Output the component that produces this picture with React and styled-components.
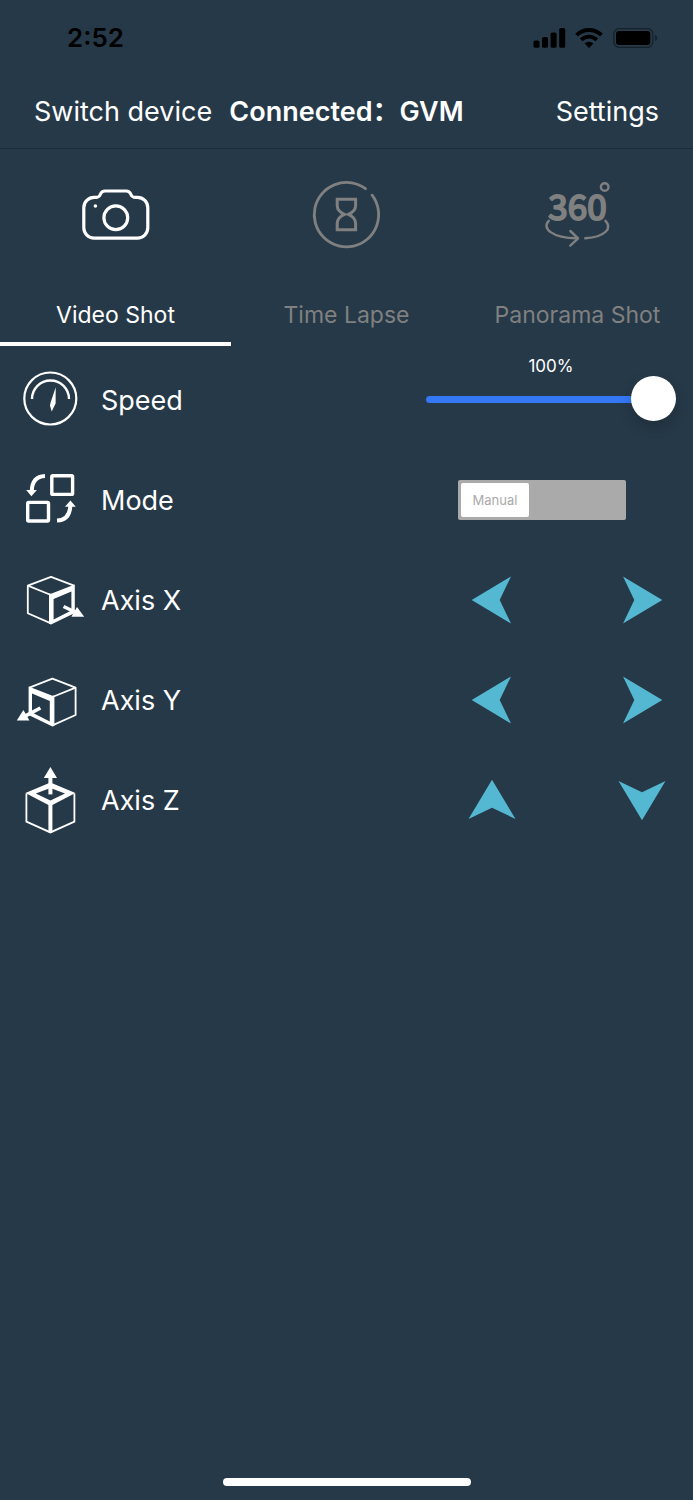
import { useState } from 'react'
import styled, { createGlobalStyle } from 'styled-components'


const tabs = [
    { id: 'video', label: 'Video Shot', Icon: CameraIcon },
    { id: 'lapse', label: 'Time Lapse', Icon: HourglassIcon },
    { id: 'panorama', label: 'Panorama Shot', Icon: PanoramaIcon },
]

const axes = [
    { name: 'Axis X', Icon: AxisXIcon, moves: [['left', 180], ['right', 0]] },
    { name: 'Axis Y', Icon: AxisYIcon, moves: [['left', 180], ['right', 0]] },
    { name: 'Axis Z', Icon: AxisZIcon, moves: [['up', 270], ['down', 90]] },
]

const App = () => {

    const [tab, setTab] = useState('video')
    const [speed, setSpeed] = useState(100)
    const [auto, setAuto] = useState(false)

    return (
        <Layout>
            <GlobalStyle />
            <StatusBar>
                <Time>2:52</Time>
                <StatusIcons />
            </StatusBar>
            <NavBar>
                <NavLink href="#devices">Switch device</NavLink>
                <Title>Connected：GVM</Title>
                <NavLink href="#settings" $end>Settings</NavLink>
            </NavBar>
            <Tabs role="tablist">
                {tabs.map(({ id, label, Icon }) => (
                    <Tab
                        key={id}
                        role="tab"
                        aria-selected={tab === id}
                        $active={tab === id}
                        onClick={() => setTab(id)}
                    >
                        <Icon />
                        <TabLabel>{label}</TabLabel>
                    </Tab>
                ))}
            </Tabs>
            <Rows>
                <Row>
                    <SpeedIcon />
                    <Name as="label" htmlFor="speed">Speed</Name>
                    <SpeedControl>
                        <Percent>{speed}%</Percent>
                        <Slider
                            id="speed"
                            type="range"
                            min="0"
                            max="100"
                            value={speed}
                            style={{ '--fill': `${speed}%` }}
                            onChange={(e) => setSpeed(Number(e.target.value))}
                        />
                    </SpeedControl>
                </Row>
                <Row>
                    <ModeIcon />
                    <Name id="mode">Mode</Name>
                    <Switch
                        role="switch"
                        aria-checked={auto}
                        aria-labelledby="mode"
                        $on={auto}
                        onClick={() => setAuto(!auto)}
                    >
                        <SwitchThumb>{auto ? 'Auto' : 'Manual'}</SwitchThumb>
                    </Switch>
                </Row>
                {axes.map(({ name, Icon, moves }) => (
                    <Row key={name}>
                        <Icon />
                        <Name>{name}</Name>
                        <Arrows>
                            {moves.map(([direction, angle]) => (
                                <ArrowButton key={direction} aria-label={`${name} ${direction}`}>
                                    <svg width="50" height="50" viewBox="0 0 50 50">
                                        <path d="M6 1.5 L45.3 25 L6 48.5 L17.3 25 Z" fill="#54b8d2" transform={`rotate(${angle} 25 25)`} />
                                    </svg>
                                </ArrowButton>
                            ))}
                        </Arrows>
                    </Row>
                ))}
            </Rows>
            <Footer>
                <HomeBar />
            </Footer>
        </Layout>
    )
}

export default App

function StatusIcons() {
    return (
        <svg width="125" height="20" viewBox="0 0 125 20" aria-hidden="true">
            <rect x="0.5" y="12.5" width="6" height="7.3" rx="1.6" />
            <rect x="9" y="9" width="6" height="10.8" rx="1.6" />
            <rect x="17.6" y="4.6" width="6" height="15.2" rx="1.6" />
            <rect x="26.2" y="0" width="6" height="19.8" rx="1.6" />
            <g fill="none" stroke="#000">
                <path d="M43.6 7.1 A17.5 17.5 0 0 1 68.4 7.1" strokeWidth="4" />
                <path d="M48.2 11.9 A11 11 0 0 1 63.8 11.9" strokeWidth="3.8" />
            </g>
            <path d="M56 19.9 L51.6 15.6 A6.2 6.2 0 0 1 60.4 15.6 Z" />
            <rect x="80.8" y="0.6" width="39" height="18.8" rx="5.4" fill="none" stroke="#000" strokeOpacity="0.4" strokeWidth="1.4" />
            <rect x="83" y="3" width="34.3" height="14" rx="3" />
            <path d="M122 6.8 Q124.4 8 124.4 10 Q124.4 12 122 13.2 Z" fillOpacity="0.4" />
        </svg>
    )
}

function CameraIcon() {
    return (
        <TabIcon viewBox="0.5 0 80 80" strokeWidth="3.2">
            <path d="M18.6 23.4 H20 C23.2 23.4 24 22.6 25 20 C26 17.6 26.8 17 29.5 17 H50.6 C53.4 17 54.2 17.6 55.2 20 C56.2 22.6 57 23.4 60.2 23.4 H62 A10.3 10.3 0 0 1 72.3 33.7 V53.8 A10.3 10.3 0 0 1 62 64.1 H18.6 A10.3 10.3 0 0 1 8.3 53.8 V33.7 A10.3 10.3 0 0 1 18.6 23.4 Z" />
            <circle cx="40.3" cy="43.7" r="11.9" />
            <circle cx="19.9" cy="32" r="1.8" fill="currentColor" stroke="none" />
        </TabIcon>
    )
}

function HourglassIcon() {
    return (
        <TabIcon viewBox="0.5 0 80 80" strokeWidth="2.8">
            <path d="M65.6 21.2 A32.2 32.2 0 1 1 59 14.7" />
            <path d="M30.7 25.2 H49.1 V31.5 C49.1 36.5 46 38.6 41.8 40.4 C46 42.2 49.1 44.4 49.1 49.4 V55.8 H30.7 V49.4 C30.7 44.4 33.8 42.2 38 40.4 C33.8 38.6 30.7 36.5 30.7 31.5 Z" strokeWidth="3" strokeLinejoin="miter" />
        </TabIcon>
    )
}

function PanoramaIcon() {
    return (
        <TabIcon viewBox="0.5 0 80 80" strokeWidth="2.4">
            <IconText x="40" y="45.5" textAnchor="middle">360</IconText>
            <circle cx="67.2" cy="13" r="3.8" />
            <path d="M11.3 46.8 C4 54 14 64 39.5 64.3" />
            <path d="M32.8 57 L40.6 64.3 L32.8 71.6" />
            <path d="M47.8 64.3 C68 63 75 54 68 46.8" />
        </TabIcon>
    )
}

function SpeedIcon() {
    return (
        <RowIcon viewBox="0 0 100 100">
            <circle cx="50.3" cy="48.5" r="26" strokeWidth="2.2" />
            <path d="M32 49 A18.5 18.5 0 0 1 69 49" strokeWidth="2.4" />
            <path d="M55.7 37.3 L55.6 53.5 L51.7 61.5 L50 55.5 L50.6 52.5 Z" fill="#fff" stroke="none" />
        </RowIcon>
    )
}

function ModeIcon() {
    return (
        <RowIcon viewBox="0 0 100 100">
            <g strokeWidth="3.4">
                <rect x="51.8" y="25.8" width="20.8" height="18.6" rx="1" />
                <rect x="27.7" y="52.4" width="20.8" height="18.6" rx="1" />
            </g>
            <g strokeWidth="4">
                <path d="M45 26 C37 26.4 32 31 31.8 41" />
                <path d="M57 70.6 C65 70.2 70 65.6 70.3 55.6" />
            </g>
            <g fill="#fff" stroke="none">
                <path d="M26.2 40 H36.9 L31.4 46.2 Z" />
                <path d="M65 56.8 H75.8 L70.4 50.6 Z" />
            </g>
        </RowIcon>
    )
}

function AxisXIcon() {
    return (
        <RowIcon viewBox="0 0 100 100">
            <path d="M51 45 L27.8 35.6 L51 26.8 L74 35.6 M27.8 35.6 V63.2 L51 73.4" strokeWidth="1.8" strokeLinejoin="round" />
            <path d="M49 43.4 L51 43.8 L74.8 34.4 V63 L51 74.4 L49 73.8 Z M53.6 49 V69.4 L71.4 60.6 V41.6 Z" fill="#fff" fillRule="evenodd" stroke="none" />
            <path d="M63.6 56.5 L77 63" strokeWidth="3.6" />
            <path d="M84.2 66.8 L77 57 L71.4 66.8 Z" fill="#fff" stroke="none" />
        </RowIcon>
    )
}

function AxisYIcon() {
    return (
        <RowIcon viewBox="0 0 100 100">
            <path d="M52.4 47 L75.6 37.6 L52.4 28.6 L29.4 37.6 M75.6 37.6 V65 L52.4 75.4" strokeWidth="1.8" strokeLinejoin="round" />
            <path d="M54.4 45.4 L52.4 45.8 L28.6 36.4 V65 L52.4 76.4 L54.4 75.8 Z M49.8 51 V71.4 L32 62.6 V43.6 Z" fill="#fff" fillRule="evenodd" stroke="none" />
            <path d="M40.4 58 L26 65.6" strokeWidth="3.6" />
            <path d="M16.8 70.4 L23.4 60 L29.4 70.4 Z" fill="#fff" stroke="none" />
        </RowIcon>
    )
}

function AxisZIcon() {
    return (
        <RowIcon viewBox="0 0 100 100">
            <path d="M26.4 43.5 V71.6 L50.4 82.4 L74.4 71.6 V43.5" strokeWidth="1.8" />
            <path d="M50.4 53 V82.4" strokeWidth="4" />
            <path d="M50.4 32.4 L75.4 43 L50.4 56 L25.4 43 Z M50.4 38 L35.8 43.6 L50.4 50.6 L65 43.6 Z" fill="#fff" fillRule="evenodd" stroke="none" />
            <path d="M50.4 44.4 V26" strokeWidth="4" />
            <path d="M50.4 17 L57 28 H43.8 Z" fill="#fff" stroke="none" />
        </RowIcon>
    )
}

const GlobalStyle = createGlobalStyle`
* {
  box-sizing: border-box;
}
body {
  margin: 0;
  background: #263948;
}
button {
  padding: 0;
  border: 0;
  background: none;
  color: inherit;
  font: inherit;
  cursor: pointer;
}
`
const Layout = styled.div`
display: flex;
flex-direction: column;
min-height: 100vh;
color: white;
font-family: Inter, "Noto Sans CJK SC", sans-serif;
font-size: 27px;
line-height: 36px;
`
const StatusBar = styled.div`
display: flex;
align-items: center;
justify-content: space-between;
height: 76px;
padding: 0 35px 0 67px;
color: black;
`
const Time = styled.span`
font-size: 26px;
font-weight: 600;
`
const NavBar = styled.nav`
display: grid;
grid-template-columns: 1fr auto 1fr;
align-items: center;
height: 73px;
padding: 0 34px;
border-bottom: 1px solid #1c2d3b;
white-space: nowrap;
`
const NavLink = styled.a`
color: inherit;
text-decoration: none;
justify-self: ${(props) => (props.$end ? 'end' : 'start')};
`
const Title = styled.h1`
margin: 0;
font-size: 27px;
font-weight: 600;
`
const Tabs = styled.div`
display: grid;
grid-template-columns: repeat(3, 1fr);
`
const Tab = styled.button`
display: flex;
flex-direction: column;
align-items: center;
padding: 25px 0 12px;
border-bottom: 4px solid ${(props) => (props.$active ? 'white' : 'transparent')};
color: ${(props) => (props.$active ? 'white' : '#808080')};
`
const TabIcon = styled.svg`
width: 80px;
height: 80px;
fill: none;
stroke: currentColor;
stroke-linecap: round;
stroke-linejoin: round;
`
const IconText = styled.text`
font-family: "Noto Sans CJK SC", sans-serif;
font-size: 35px;
font-weight: 400;
fill: currentColor;
stroke-width: 2px;
`
const TabLabel = styled.span`
margin-top: 46px;
font-size: 23px;
line-height: 30px;
`
const Rows = styled.main`
padding: 4px 17px 0 0;
`
const Row = styled.div`
display: flex;
align-items: center;
height: 100px;
`
const RowIcon = styled.svg`
flex: none;
width: 100px;
height: 100px;
fill: none;
stroke: white;
`
const Name = styled.span`
flex: 1;
padding: 1px 0 0 1px;
`
const SpeedControl = styled.div`
align-self: flex-start;
display: flex;
flex-direction: column;
width: 37%;
padding-top: 6px;
`
const Percent = styled.span`
font-size: 17px;
line-height: 20px;
text-align: center;
`
const Slider = styled.input`
appearance: none;
width: 100%;
height: 46px;
margin: 0;
background: none;
cursor: pointer;

&::-webkit-slider-runnable-track {
  height: 7px;
  border-radius: 4px;
  background: linear-gradient(to right, #3478f6 var(--fill), #4b5a67 var(--fill));
}
&::-webkit-slider-thumb {
  appearance: none;
  width: 45px;
  height: 45px;
  margin-top: -20px;
  border-radius: 50%;
  background: white;
  box-shadow: 0 6px 14px rgba(0, 0, 0, 0.18);
}
`
const Switch = styled.button`
display: flex;
justify-content: ${(props) => (props.$on ? 'flex-end' : 'flex-start')};
width: 168px;
height: 40px;
margin-right: 50px;
padding: 3px;
border-radius: 2px;
background: #aaaaaa;
`
const SwitchThumb = styled.span`
width: 68px;
border-radius: 2px;
background: white;
color: #aaaaaa;
font-size: 13px;
line-height: 34px;
text-align: center;
`
const Arrows = styled.div`
display: flex;
gap: 100px;
margin-right: 9px;
`
const ArrowButton = styled.button`
width: 50px;
height: 50px;

svg {
  display: block;
}
`
const Footer = styled.footer`
display: flex;
justify-content: center;
margin-top: auto;
padding: 14px 0;
`
const HomeBar = styled.div`
width: 248px;
height: 8px;
border-radius: 4px;
background: white;
`
